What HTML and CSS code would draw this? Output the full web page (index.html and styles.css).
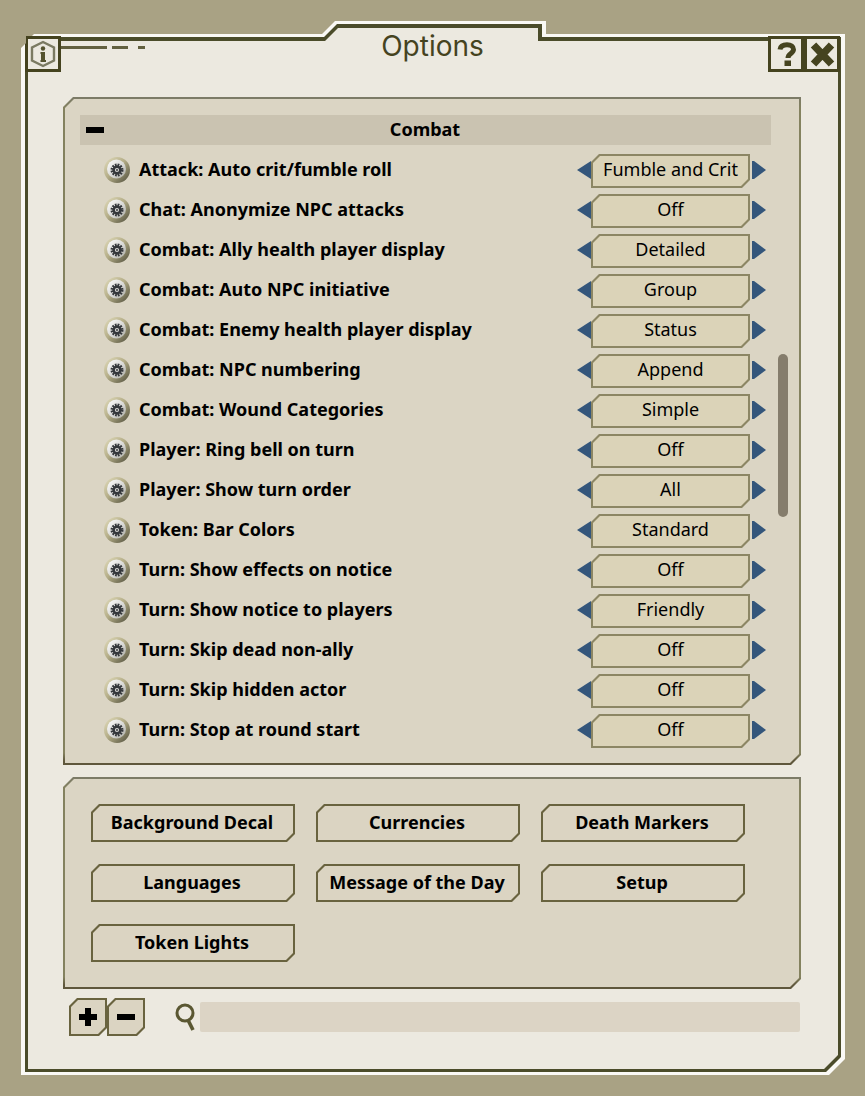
FILE: index.html
```html
<!DOCTYPE html>
<html lang="en">
<head>
<meta charset="utf-8">
<title>Options</title>
<link rel="stylesheet" href="styles.css">
</head>
<body>
<svg class="defs" aria-hidden="true">
  <defs>
    <linearGradient id="rim" x1="0" y1="0" x2="1" y2="1"><stop offset="0" stop-color="#e4dfc0"/><stop offset=".45" stop-color="#b5ae88"/><stop offset="1" stop-color="#4c4a38"/></linearGradient>
    <linearGradient id="dome" x1="0" y1="0" x2="1" y2="1"><stop offset="0" stop-color="#ffffff"/><stop offset=".6" stop-color="#d5d5d2"/><stop offset="1" stop-color="#a3a398"/></linearGradient>
    <symbol id="gear" viewBox="0 0 26 26">
      <circle cx="13" cy="13" r="13" fill="url(#rim)"/>
      <circle cx="12.5" cy="12" r="9.5" fill="url(#dome)"/>
      <circle cx="13" cy="13" r="5.2" fill="none" stroke="#34373b" stroke-width="2.6" stroke-dasharray="1.7 1.02"/>
      <circle cx="13" cy="13" r="3.4" fill="none" stroke="#34373b" stroke-width="2.6"/>
      <circle cx="13" cy="13" r="1.1" fill="#44474b"/>
    </symbol>
  </defs>
</svg>
<main class="frame">
  <header class="top">
    <div class="top-left">
      <button class="corner" aria-label="Info"><svg width="28" height="28" viewBox="0 0 28 28"><path d="M14 2 25 7.500v13L14 26 3 20.500v-13z" fill="none" stroke="#7b7a62" stroke-width="2.400"/><circle cx="14" cy="8.500" r="2.200" fill="#55532f"/><path d="M12 12h4v8h1v2h-5.500v-2h.500v-6h-.500v-2z" fill="#55532f"/></svg></button>
      <span class="dash dash-long"></span><span class="dash dash-mid"></span><span class="dash dash-short"></span>
    </div>
    <h1 class="title">Options</h1>
    <div class="top-right">
      <button class="corner" aria-label="Help"><svg width="28" height="28" viewBox="0 0 28 28"><path d="M8 9.500C8.500 6 11 4.800 15 4.800S21.500 6.500 21.500 9.500c0 4-5.500 4-5.500 8.500" fill="none" stroke="#45431f" stroke-width="5"/><path d="M12.500 20.500h6.500V26h-6.500z" fill="#45431f"/></svg></button>
      <button class="corner" aria-label="Close"><svg width="28" height="28" viewBox="0 0 28 28"><path d="m5.500 5 18 19M23.500 5l-18 19" stroke="#45431f" stroke-width="7.500"/></svg></button>
    </div>
  </header>

  <div class="content">
    <section class="panel options">
      <button class="category"><span class="minus"></span><span class="category-name">Combat</span></button>
      <div class="rows" id="rows"></div>
      <div class="scroll"></div>
    </section>

    <section class="panel tools">
      <button class="cut tool">Background Decal</button>
      <button class="cut tool">Currencies</button>
      <button class="cut tool">Death Markers</button>
      <button class="cut tool">Languages</button>
      <button class="cut tool">Message of the Day</button>
      <button class="cut tool">Setup</button>
      <button class="cut tool">Token Lights</button>
    </section>

    <footer class="bottom">
      <button class="cut square" aria-label="Expand all"><svg width="18" height="18" viewBox="0 0 18 18"><path d="M6 0h6v6h6v6h-6v6H6v-6H0V6h6z"/></svg></button>
      <button class="cut square" aria-label="Collapse all"><svg width="18" height="18" viewBox="0 0 18 18"><path d="M0 6h18v6H0z"/></svg></button>
      <label class="find" for="search" aria-label="Search"><svg width="22" height="30" viewBox="0 0 22 30"><circle cx="11" cy="11" r="8" fill="none" stroke="#5a5732" stroke-width="3"/><path d="m14 18 5 10" stroke="#5a5732" stroke-width="3.600"/></svg></label>
      <input class="search" id="search" type="text">
    </footer>
  </div>
</main>
<script src="script.js"></script>
</body>
</html>
```
FILE: styles.css
```css
* { box-sizing: border-box; }
body {
  margin: 0;
  padding: 21px 20px 21px 21px;
  min-height: 100vh;
  background: #a9a284;
  font: 18px/24px "Noto Sans", sans-serif;
  color: #000;
}
button {
  margin: 0;
  padding: 0;
  border: 0;
  background: none;
  font: inherit;
  color: inherit;
  cursor: pointer;
}
svg { display: block; }
.defs { position: absolute; width: 0; height: 0; }

/* Window outline: white rim, dark line, cream fill */
.frame {
  position: relative;
  isolation: isolate;
  padding-bottom: 39px;
  background: #faf9f5;
  clip-path: polygon(0 27px, 5px 22px, 5px 15px, 11px 15px, 13px 13px, calc(50% - 111px) 13px, calc(50% - 98px) 0, calc(50% + 113px) 0, calc(50% + 113px) 13px, 100% 13px, 100% calc(100% - 16px), calc(100% - 16px) 100%, 0 100%);
}
.frame::before, .frame::after {
  content: "";
  position: absolute;
  z-index: -1;
}
.frame::before {
  inset: 3px 4px 3px 4px;
  background: #4b4c2a;
  clip-path: polygon(0 13px, calc(50% - 109px) 13px, calc(50% - 96px) 0, calc(50% + 109px) 0, calc(50% + 109px) 13px, 100% 13px, 100% calc(100% - 15px), calc(100% - 15px) 100%, 0 100%);
}
.frame::after {
  inset: 7px 7px 6px 7px;
  background: #ece9e0;
  clip-path: polygon(0 13px, calc(50% - 108px) 13px, calc(50% - 95px) 0, calc(50% + 105px) 0, calc(50% + 105px) 13px, 100% 13px, 100% calc(100% - 14px), calc(100% - 14px) 100%, 0 100%);
}

.top {
  display: grid;
  grid-template-columns: 1fr auto 1fr;
  height: 76px;
  padding: 15px 5px 0 4px;
}
.top-left, .top-right { display: flex; align-items: flex-start; }
.top-right { justify-content: flex-end; }
.corner {
  display: grid;
  place-items: center;
  width: 36px;
  height: 36px;
  border: 3px solid #45431f;
  background: #ece9e0;
}
.dash { height: 3px; margin-top: 10px; background: #62603f; }
.dash-long { width: 46px; }
.dash-mid { width: 16px; margin-left: 5px; }
.dash-short { width: 7px; margin-left: 10px; }
.title {
  margin: 0;
  font: 400 28px/20px Inter, sans-serif;
  color: #45431f;
}

.content { padding: 0 44px 0 42px; }

/* Boxes with the top-left and bottom-right corners cut off */
.panel, .cut {
  --cut: 8px;
  --fill: #dbd4c2;
  --edge: #69633f;
  position: relative;
  isolation: isolate;
  background: var(--edge);
  clip-path: polygon(var(--cut) 0, 100% 0, 100% calc(100% - var(--cut)), calc(100% - var(--cut)) 100%, 0 100%, 0 var(--cut));
}
.panel::before, .cut::before {
  content: "";
  position: absolute;
  inset: 2px;
  z-index: -1;
  background: var(--fill);
  clip-path: polygon(calc(var(--cut) - 1px) 0, 100% 0, 100% calc(100% - var(--cut) + 1px), calc(100% - var(--cut) + 1px) 100%, 0 100%, 0 calc(var(--cut) - 1px));
}
.panel {
  --cut: 10px;
  --edge: linear-gradient(#7c7b68, #84825f 12px, #84825f calc(100% - 12px), #5f573c calc(100% - 4px));
  --fill: #dbd5c4;
}

.options { padding: 18px 30px 15px 17px; }
.category {
  display: flex;
  align-items: center;
  width: 100%;
  height: 30px;
  padding: 0 6px;
  margin-bottom: 5px;
  background: #cac3b1;
  font-weight: 700;
}
.minus { width: 18px; height: 6px; background: #000; }
.category-name { flex: 1; padding: 0 19px 2px 0; }

.row {
  display: flex;
  align-items: center;
  height: 40px;
  padding: 0 5px 0 24px;
}
.gear { width: 26px; height: 26px; }
.gear svg { width: 26px; height: 26px; }
.name { flex: 1; padding: 0 0 2px 9px; font-weight: 700; }
.cycler { display: flex; align-items: center; }
.value {
  --fill: #dbd3b8;
  --edge: #8c8664;
  display: block;
  width: 159px;
  height: 34px;
  margin-top: 2px;
  line-height: 30px;
  text-align: center;
}
.arrow { width: 14px; height: 18px; background: #34567b; }
.prev { clip-path: polygon(0 50%, 100% 0, 100% 100%); }
.next { margin-left: 2px; clip-path: polygon(0 0, 2px 0, 100% 50%, 2px 100%, 0 100%); }

.scroll {
  position: absolute;
  top: 257px;
  right: 13px;
  width: 10px;
  height: 163px;
  border-radius: 5px;
  background: #857d6c;
}

.tools {
  display: grid;
  grid-template-columns: repeat(auto-fill, 204px);
  gap: 22px 21px;
  margin-top: 12px;
  padding: 27px 28px;
}
.tool { height: 38px; padding: 0 2px 2px 0; font-weight: 700; }

.bottom { display: flex; align-items: center; padding: 9px 1px 0 6px; }
.square { display: grid; place-items: center; width: 38px; height: 38px; }
.find { margin: 0 4px 0 29px; }
.search {
  flex: 1;
  min-width: 0;
  height: 30px;
  padding: 0 8px;
  border: 0;
  border-radius: 2px;
  background: #dcd4c5;
  font: inherit;
}
```
FILE: script.js
```js
const options = [
  ["Attack: Auto crit/fumble roll", "Fumble and Crit"],
  ["Chat: Anonymize NPC attacks", "Off"],
  ["Combat: Ally health player display", "Detailed"],
  ["Combat: Auto NPC initiative", "Group"],
  ["Combat: Enemy health player display", "Status"],
  ["Combat: NPC numbering", "Append"],
  ["Combat: Wound Categories", "Simple"],
  ["Player: Ring bell on turn", "Off"],
  ["Player: Show turn order", "All"],
  ["Token: Bar Colors", "Standard"],
  ["Turn: Show effects on notice", "Off"],
  ["Turn: Show notice to players", "Friendly"],
  ["Turn: Skip dead non-ally", "Off"],
  ["Turn: Skip hidden actor", "Off"],
  ["Turn: Stop at round start", "Off"]
];
document.getElementById("rows").innerHTML = options.map(([name, value], i) => `
  <div class="row">
    <button class="gear" aria-label="Details"><svg><use href="#gear"/></svg></button>
    <span class="name" id="name-${i}">${name}</span>
    <div class="cycler" role="group" aria-labelledby="name-${i}">
      <button class="arrow prev" aria-label="Previous"></button>
      <output class="cut value">${value}</output>
      <button class="arrow next" aria-label="Next"></button>
    </div>
  </div>`).join("");
```
